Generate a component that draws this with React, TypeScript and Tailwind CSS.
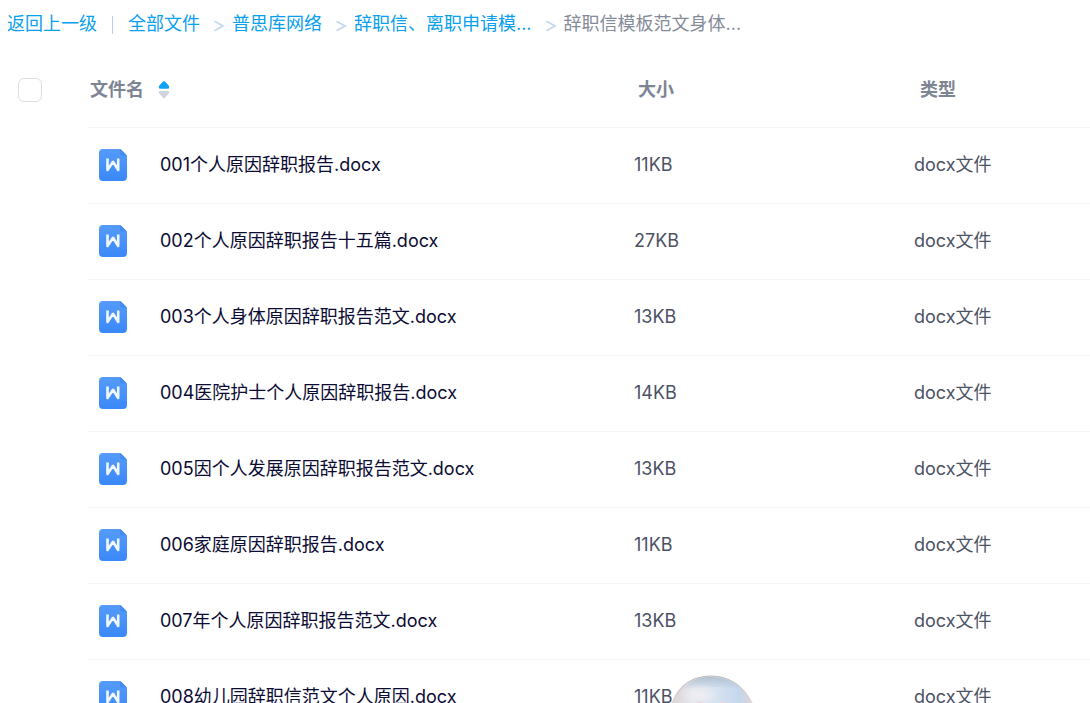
const files = [
  { name: "001个人原因辞职报告.docx", size: "11KB", type: "docx文件" },
  { name: "002个人原因辞职报告十五篇.docx", size: "27KB", type: "docx文件" },
  { name: "003个人身体原因辞职报告范文.docx", size: "13KB", type: "docx文件" },
  { name: "004医院护士个人原因辞职报告.docx", size: "14KB", type: "docx文件" },
  { name: "005因个人发展原因辞职报告范文.docx", size: "13KB", type: "docx文件" },
  { name: "006家庭原因辞职报告.docx", size: "11KB", type: "docx文件" },
  { name: "007年个人原因辞职报告范文.docx", size: "13KB", type: "docx文件" },
  { name: "008幼儿园辞职信范文个人原因.docx", size: "11KB", type: "docx文件" },
];

const crumbs = ["全部文件", "普思库网络", "辞职信、离职申请模..."];

function Chevron() {
  return (
    <svg width="12" height="12" viewBox="0 0 12 12" className="mt-1 shrink-0" aria-hidden="true">
      <path d="M1.5 1.2L10 6L1.5 10.8" fill="none" stroke="#c4d8f2" strokeWidth="1.8" />
    </svg>
  );
}

function DocIcon() {
  return (
    <svg width="28" height="32" viewBox="0 0 28 32" className="block" aria-hidden="true">
      <defs>
        <linearGradient id="doc" x1="0" y1="0" x2="0" y2="1">
          <stop offset="0" stopColor="#559bfa" />
          <stop offset="1" stopColor="#3a88f8" />
        </linearGradient>
      </defs>
      <path
        d="M4 0H20.2Q21.4 0 22.2 0.8L27 5.4Q28 6.3 28 7.6V28Q28 32 24 32H4Q0 32 0 28V4Q0 0 4 0Z"
        fill="url(#doc)"
      />
      <path d="M20.8 0.1Q21.6 0.3 22.2 0.8L27 5.4Q27.6 6 27.8 6.6H23Q20.8 6.6 20.8 4.4Z" fill="#468bf0" />
      <path
        d="M8.5 9.5V21L14 12.8L19.2 21V9.5"
        fill="none"
        stroke="#f2f8ff"
        strokeWidth="2.6"
        strokeLinejoin="round"
      />
    </svg>
  );
}

function SortIcon() {
  return (
    <svg width="12" height="18" viewBox="0 0 12 18" aria-hidden="true">
      <path d="M5 0.6Q6 -0.2 7 0.6L10.6 4.6Q11.6 6 10.8 7.2Q10.4 7.8 9.6 7.8H2.4Q1.6 7.8 1.2 7.2Q0.4 6 1.4 4.6Z" fill="#0da2f7" />
      <path d="M2 10H10Q11.6 10 11.4 11.4Q11.2 12 10.6 12.6L7 16.8Q6 17.8 5 16.8L1.4 12.6Q0.8 12 0.6 11.4Q0.4 10 2 10Z" fill="#d2d4dd" />
    </svg>
  );
}

function Assistant() {
  return (
    <svg width="84" height="28" viewBox="0 0 84 28" className="block" aria-hidden="true">
      <defs>
        <linearGradient id="orb" x1="0" y1="0" x2="1" y2="0">
          <stop offset="0" stopColor="#dfd3d6" />
          <stop offset="0.25" stopColor="#e2e5ec" />
          <stop offset="0.6" stopColor="#d3e1f1" />
          <stop offset="0.85" stopColor="#c4d7eb" />
          <stop offset="1" stopColor="#dfd5d7" />
        </linearGradient>
        <radialGradient id="glow">
          <stop offset="0" stopColor="#f1eff5" />
          <stop offset="1" stopColor="#f1eff5" stopOpacity="0" />
        </radialGradient>
        <linearGradient id="shade" x1="0" y1="0" x2="0" y2="1">
          <stop offset="0" stopColor="#b3c0cf" />
          <stop offset="1" stopColor="#b3c8de" stopOpacity="0" />
        </linearGradient>
        <linearGradient id="rim" x1="0" y1="0" x2="0" y2="1">
          <stop offset="0" stopColor="#bdb8bb" />
          <stop offset="1" stopColor="#e0d3d2" />
        </linearGradient>
      </defs>
      <path d="M2 28C10 8 24 1 41 1C58 1 72 9 82 28Z" fill="url(#orb)" />
      <path d="M12 15C21 4 30 2 41 2C54 2 64 7 72 15C58 11 30 11 12 15Z" fill="url(#shade)" />
      <ellipse cx="30" cy="20" rx="20" ry="11" fill="url(#glow)" />
      <path d="M2 28C10 8 24 1 41 1C58 1 72 9 82 28" fill="none" stroke="url(#rim)" strokeWidth="1.2" />
      <path d="M26 28Q30 25.5 34 28ZM49 28Q53 25.5 57 28Z" fill="#ecd5dc" />
    </svg>
  );
}

export default function App() {
  return (
    <main className="relative h-screen overflow-hidden bg-white font-['Inter','Noto_Sans_CJK_SC',sans-serif] text-lg text-[#4c5164]">
      <nav aria-label="路径" className="flex h-12 items-center whitespace-nowrap pl-[7px] text-[#09a0ee]">
        <a href="#back">返回上一级</a>
        <span className="mx-[15px] mt-0.5 h-[18px] w-px bg-[#b5cdf0]" />
        {crumbs.map((crumb) => (
          <span key={crumb} className="flex items-center">
            <a href="#folder" className="mr-[13px]">
              {crumb}
            </a>
            <Chevron />
            <span className="w-[7px]" />
          </span>
        ))}
        <span className="text-[#858b99]">辞职信模板范文身体...</span>
      </nav>

      <table className="w-full table-fixed border-separate border-spacing-0 text-left">
        <colgroup>
          <col className="w-[88px]" />
          <col />
          <col className="w-[280px]" />
          <col className="w-[180px]" />
        </colgroup>
        <thead className="text-[#7d8594]">
          <tr className="h-20">
            <th className="pl-[18px] pt-1">
              <input
                type="checkbox"
                aria-label="全选"
                className="block size-6 appearance-none rounded-md border border-[#dcdee4] bg-white"
              />
            </th>
            <th className="border-b border-[#f5f5f7] pl-0.5 pt-1 font-bold">
              <button type="button" className="flex items-center gap-3.5">
                文件名
                <SortIcon />
              </button>
            </th>
            <th className="border-b border-[#f5f5f7] pl-2 pt-1 font-bold">大小</th>
            <th className="border-b border-[#f5f5f7] pl-2.5 pt-1 font-bold">类型</th>
          </tr>
        </thead>
        <tbody>
          {files.map((file) => (
            <tr key={file.name} className="h-[76px]">
              <td />
              <td className="border-b border-[#f5f5f7] pb-0.5 pl-[11px]">
                <div className="flex items-center gap-[33px] whitespace-nowrap text-[#0b0b33]">
                  <DocIcon />
                  {file.name}
                </div>
              </td>
              <td className="border-b border-[#f5f5f7] pb-0.5 pl-1">{file.size}</td>
              <td className="border-b border-[#f5f5f7] pb-0.5 pl-1">{file.type}</td>
            </tr>
          ))}
        </tbody>
      </table>

      {/* Floating assistant peeking in from the bottom edge */}
      <button type="button" aria-label="助手" className="absolute bottom-0 left-[670px]">
        <Assistant />
      </button>
    </main>
  );
}
